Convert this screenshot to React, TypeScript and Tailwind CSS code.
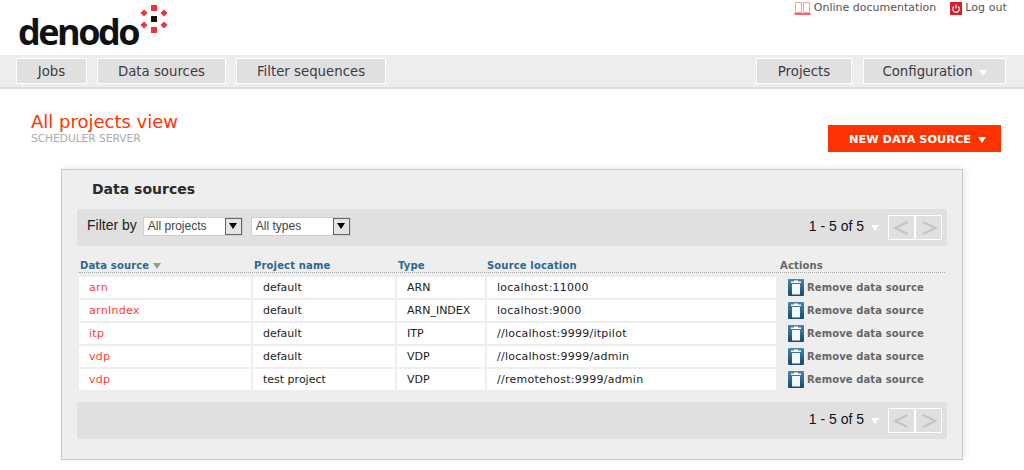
const rows = [
  { name: 'arn', project: 'default', type: 'ARN', location: 'localhost:11000' },
  { name: 'arnIndex', project: 'default', type: 'ARN_INDEX', location: 'localhost:9000' },
  { name: 'itp', project: 'default', type: 'ITP', location: '//localhost:9999/itpilot' },
  { name: 'vdp', project: 'default', type: 'VDP', location: '//localhost:9999/admin' },
  { name: 'vdp', project: 'test project', type: 'VDP', location: '//remotehost:9999/admin' },
];

const dejavu = "font-['DejaVu_Sans',sans-serif]";
const cols = 'grid grid-cols-[172px_142px_88px_289px_1fr] gap-x-[2px]';

function Logo() {
  return (
    <div className="flex items-start">
      <span className="ml-[-1px] mt-[9px] w-[121px] font-['Open_Sans',sans-serif] text-[36px] leading-[46px] font-bold tracking-[-2.500px] text-[#111]">denodo</span>
      <svg width="30" height="30" viewBox="0 0 30 30" className="mt-[4px]">
        <rect x="12" y="1" width="6" height="6" fill="#f0323c" />
        <rect x="12" y="23" width="6" height="6" fill="#f0323c" />
        <rect x="2.500" y="6.500" width="5" height="5" fill="#f0323c" transform="rotate(45 5 9)" />
        <rect x="22.500" y="6.500" width="5" height="5" fill="#f0323c" transform="rotate(45 25 9)" />
        <rect x="2.500" y="18.500" width="5" height="5" fill="#f0323c" transform="rotate(45 5 21)" />
        <rect x="22.500" y="18.500" width="5" height="5" fill="#f0323c" transform="rotate(45 25 21)" />
        <rect x="12" y="12" width="6" height="6" fill="#111" />
      </svg>
    </div>
  );
}

function BookIcon() {
  return (
    <svg width="17" height="13" viewBox="0 0 17 13" fill="none" stroke="#f0a0a8" strokeWidth="1">
      <path d="M1.500 .5h6v10h-6zM9.500 .5h6v10h-6z" />
      <path d="M.5 12h16" stroke="#e8323f" strokeWidth="1.500" />
    </svg>
  );
}

function PowerIcon() {
  return (
    <svg width="12" height="13" viewBox="0 0 12 13">
      <rect width="12" height="13" fill="#d2202c" />
      <path d="M3.800 4.500a3.300 3.300 0 1 0 4.400 0" fill="none" stroke="#fff" strokeWidth="1.100" />
      <path d="M6 2.500v4" stroke="#fff" strokeWidth="1.100" />
    </svg>
  );
}

function TrashIcon() {
  return (
    <svg width="16" height="17" viewBox="0 0 16 17" className="shrink-0">
      <defs>
        <linearGradient id="trash-bg" x1="0" y1="0" x2="0" y2="1">
          <stop offset="0" stopColor="#4a86ad" />
          <stop offset="1" stopColor="#174a70" />
        </linearGradient>
      </defs>
      <rect width="16" height="17" rx="1" fill="url(#trash-bg)" />
      <path d="M6 1.500h4v1h3v1.500h-10v-1.500h3z" fill="#fff" />
      <path d="M4 5h8v10.500h-8z" fill="#f4f6f8" />
    </svg>
  );
}

function Arrow({ className }: { className: string }) {
  return <span className={`inline-block h-0 w-0 border-x-[4px] border-t-[6px] border-x-transparent ${className}`} />;
}

function NavButton({ label, width, caret }: { label: string; width: string; caret?: boolean }) {
  return (
    <div className={`flex h-[26px] items-center justify-center gap-[6px] border border-white bg-[#e0e0e0] pt-[1px] text-[13.300px] text-[#3c3c46] ${width}`}>
      <span>{label}</span>
      {caret && <Arrow className="mt-[2px] border-t-white" />}
    </div>
  );
}

function FakeSelect({ label, width }: { label: string; width: string }) {
  return (
    <div className={`flex h-[19px] items-center justify-between border border-[#d0d0d0] bg-white pl-[4px] font-['Liberation_Sans',sans-serif] text-[12px] text-[#444] ${width}`}>
      <span>{label}</span>
      <span className="flex h-[17px] w-[17px] items-center justify-center border border-[#666] bg-[#e4e4e4]">
        <Arrow className="border-x-[3px] border-t-[4px] border-t-black" />
      </span>
    </div>
  );
}

function Pager() {
  return (
    <div className="flex items-center">
      <span className="mb-[2px] mr-[7px] font-['Liberation_Sans',sans-serif] text-[14px] text-[#111]">1 - 5 of 5</span>
      <Arrow className="mr-[9px] border-t-white" />
      <div className="flex h-[25px]">
        {['M18.500 6 6 12 18.500 18', 'M7 6 19.500 12 7 18'].map(d => (
          <div key={d} className="h-[25px] w-[27px] border border-white">
            <svg width="25" height="23" viewBox="0 0 25 23" fill="none" stroke="#c4c4c4" strokeWidth="2">
              <path d={d} />
            </svg>
          </div>
        ))}
      </div>
    </div>
  );
}

export default function App() {
  return (
    <div className={`h-[470px] w-[1024px] overflow-hidden bg-white ${dejavu}`}>
      <header className="flex h-[55px] justify-between pl-[19px] pr-[17px]">
        <Logo />
        <div className="flex h-[15px] items-center pt-[2px] text-[11px] text-[#555]">
          <BookIcon />
          <span className="ml-[3px]">Online documentation</span>
          <span className="ml-[14px]"><PowerIcon /></span>
          <span className="ml-[3px] tracking-[0.1px]">Log out</span>
        </div>
      </header>

      <nav className="flex h-[34px] items-start justify-between border-b-2 border-[#dcdcdc] bg-[#ededed] pl-[16px] pr-[18px] pt-[3px]">
        <div className="flex gap-[10px]">
          <NavButton label="Jobs" width="w-[71px]" />
          <NavButton label="Data sources" width="w-[129px]" />
          <NavButton label="Filter sequences" width="w-[150px]" />
        </div>
        <div className="flex gap-[11px]">
          <NavButton label="Projects" width="w-[96px]" />
          <NavButton label="Configuration" caret width="w-[143px]" />
        </div>
      </nav>

      <div className="flex justify-between pl-[31px] pr-[23px]">
        <div className="pt-[22px]">
          <h1 className="text-[18px] leading-[22px] text-[#ff3300]">All projects view</h1>
          <p className="text-[10.600px] leading-[11px] text-[#aaa]">SCHEDULER SERVER</p>
        </div>
        <div className="mt-[36px] flex h-[27px] w-[173px] items-center justify-center gap-[7px] bg-[#ff3300] pl-[6px] pt-[3px] text-[11.300px] font-bold text-white">
          NEW DATA SOURCE
          <Arrow className="border-t-white" />
        </div>
      </div>

      <main className="ml-[61px] mt-[17px] h-[291px] w-[902px] border border-[#c8c8c8] bg-[#eeeeee] px-[15px] shadow-[3px_-1px_6px_rgba(0,0,0,0.08)]">
        <h2 className="pl-[15px] pt-[11px] text-[14px] leading-[17px] font-bold text-[#2b2b2b]">Data sources</h2>

        <div className="mt-[11px] flex h-[37px] items-center justify-between bg-[#e0e0e0] pl-[10px] pr-[5px]">
          <div className="mb-[3px] flex items-center">
            <span className="mb-[1px] mr-[6px] font-['Liberation_Sans',sans-serif] text-[14px] text-[#222]">Filter by</span>
            <FakeSelect label="All projects" width="w-[100px]" />
            <span className="w-[8px]" />
            <FakeSelect label="All types" width="w-[100px]" />
          </div>
          <Pager />
        </div>

        <div className={`${cols} ml-[2px] mr-[2px] mt-[14px] h-[13px] border-b border-dotted border-[#aaa] text-[10px] leading-[12px] font-bold tracking-[0.15px] text-[#2f6690]`}>
          <span className="flex items-center gap-[4px] self-start pl-px">Data source <Arrow className="border-t-[#999]" /></span>
          <span className="pl-[1px]">Project name</span>
          <span className="pl-[1px]">Type</span>
          <span>Source location</span>
          <span className="pl-[2px] text-[#666]">Actions</span>
        </div>

        <div className="ml-[2px] mr-[2px] mt-[4px] flex flex-col gap-[2px] text-[11px]">
          {rows.map((row, i) => (
            <div key={i} className={`${cols} h-[21px]`}>
              <div className="flex items-center bg-white pl-[10px] pt-[1px] tracking-[0.3px] text-[#ff3c32]">{row.name}</div>
              <div className="flex items-center bg-white pl-[10px] pt-[1px] text-[#222]">{row.project}</div>
              <div className="flex items-center bg-white pl-[10px] pt-[1px] text-[#222]">{row.type}</div>
              <div className="flex items-center bg-white pl-[10px] pt-[1px] tracking-[0.25px] text-[#222]">{row.location}</div>
              <div className="flex items-center gap-[3px] pl-[10px] text-[10px] font-bold tracking-[0.1px] text-[#666]">
                <TrashIcon />
                <span>Remove data source</span>
              </div>
            </div>
          ))}
        </div>

        <div className="mt-[12px] flex h-[37px] items-center justify-end bg-[#e0e0e0] pr-[5px]">
          <Pager />
        </div>
      </main>
    </div>
  );
}
